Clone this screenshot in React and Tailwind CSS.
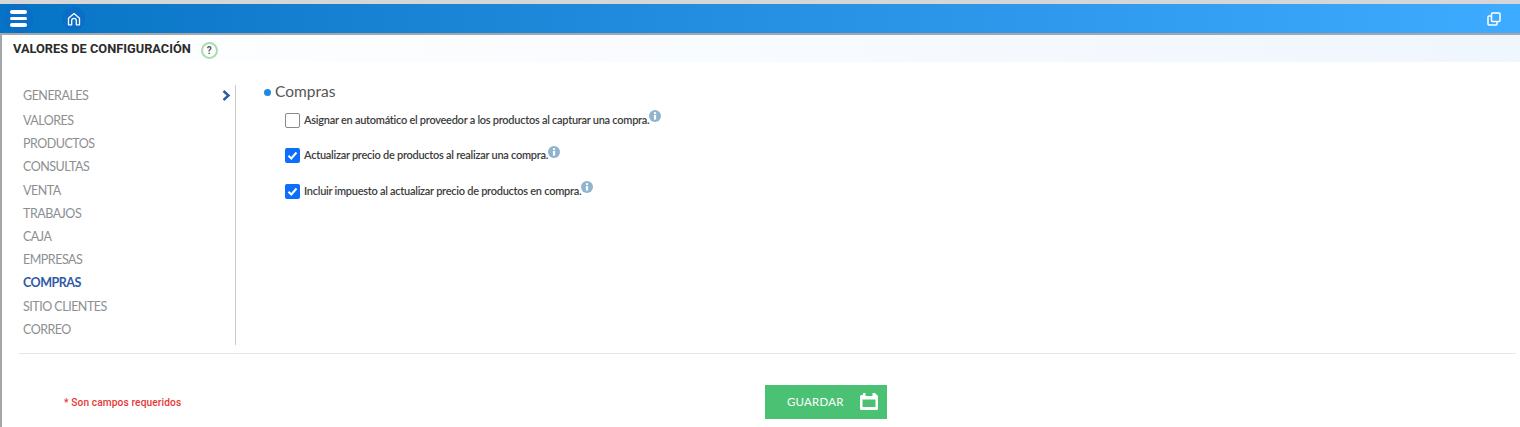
const items = ["VALORES","PRODUCTOS","CONSULTAS","VENTA","TRABAJOS","CAJA","EMPRESAS","COMPRAS","SITIO CLIENTES","CORREO"];
const opts = [
  { t: "Asignar en automático el proveedor a los productos al capturar una compra.", c: false },
  { t: "Actualizar precio de productos al realizar una compra.", c: true },
  { t: "Incluir impuesto al actualizar precio de productos en compra.", c: true },
];
function Info() {
  return (
    <svg width="12" height="12" viewBox="0 0 12 12" className="shrink-0 mt-[-8px] ml-0">
      <circle cx="6" cy="6" r="6" fill="#8fb4d0" />
      <rect x="4.9" y="5" width="2.2" height="4.6" fill="#fff" />
      <rect x="4.9" y="2.2" width="2.2" height="1.9" fill="#fff" />
    </svg>
  );
}
export default function App() {
  return (
    <div className="w-[1520px] h-[427px] overflow-hidden bg-white font-['Lato',sans-serif] flex flex-col">
      <div className="h-[4px] bg-[#d6d6d6] shrink-0" />
      <header className="h-[31px] shrink-0 flex items-center bg-gradient-to-r from-[#0574c4] to-[#3dabff] border-b-2 border-[#a3a7ab] pl-[4px] pr-[19px]">
        <div className="w-[29px] h-[29px] rounded-full bg-[#0a6dc6] flex flex-col items-center justify-center gap-[3px] shrink-0">
          <span className="w-[17px] h-[3.5px] bg-white rounded-full" />
          <span className="w-[17px] h-[3.5px] bg-white rounded-full" />
          <span className="w-[17px] h-[3.5px] bg-white rounded-full" />
        </div>
        <div className="ml-[29px] w-[23px] h-[23px] rounded-full bg-[#0a6dc6] flex items-center justify-center shrink-0">
          <svg width="14" height="14" viewBox="0 0 14 14" fill="none" stroke="#fff" strokeWidth="1.3">
            <path d="M1.5 6.2 7 1.6l5.5 4.6v6.6H9.3V8.6a2.3 2.3 0 0 0-4.6 0v4.2H1.5z" strokeLinejoin="round" />
          </svg>
        </div>
        <svg width="14" height="14" viewBox="0 0 14 14" fill="none" stroke="#fff" strokeWidth="1.5" className="ml-auto">
          <rect x="4.5" y="1" width="8.5" height="8.5" rx="1" />
          <path d="M4 4H2a1 1 0 0 0-1 1v7a1 1 0 0 0 1 1h7a1 1 0 0 0 1-1v-2" />
        </svg>
      </header>
      <div className="flex-1 flex flex-col border-l-2 border-[#a3a7ab] relative">
        <div className="h-[27px] shrink-0 flex items-center bg-gradient-to-r from-white to-[#f0f6fe] pl-[11px]">
          <h1 className="font-['Roboto',sans-serif] font-bold text-[12.8px] leading-none text-[#2b2b2b] mt-[2px]">VALORES DE CONFIGURACIÓN</h1>
          <span className="ml-[10px] mt-[4px] w-[17px] h-[17px] rounded-full border-2 border-[#a9dcae] flex items-center justify-center font-['Roboto',sans-serif] font-bold text-[10px] text-[#555]">?</span>
        </div>
        <div className="flex pt-[23px] h-[291px] shrink-0">
          <nav className="w-[214px] ml-[20px] h-[260px] border-r border-[#c9c9c9] text-[12.5px] tracking-[-0.5px] leading-[23.2px] text-[#8d8f91] shrink-0">
            <div className="flex items-center justify-between h-[22px] mb-[2px]">
              <span className="ml-[1px]">GENERALES</span>
              <svg width="9" height="11" viewBox="0 0 9 11" fill="none" stroke="#2b5ca8" strokeWidth="2.4" className="mr-[4px] mt-[-2px]"><path d="M1.5 1 6.5 5.5 1.5 10" /></svg>
            </div>
            {items.map(i => (
              <div key={i} className={i === "COMPRAS" ? "ml-[1px] font-bold text-[#2f5aa5]" : "ml-[1px]"}>{i}</div>
            ))}
          </nav>
          <section className="ml-[28px] flex-1">
            <div className="flex items-center h-[14px] text-[#555] text-[15.5px]">
              <span className="w-[7px] h-[7px] rounded-full bg-[#1e88e5] mr-[4px]" />
              Compras
            </div>
            <div className="ml-[21px] mt-[11px] flex flex-col gap-[15.5px]">
              {opts.map(o => (
                <div key={o.t} className="flex items-center h-[20px] text-[11px] tracking-[-0.27px] font-semibold text-[#3c3c3c]">
                  {o.c ? (
                    <span className="w-[15px] h-[15px] rounded-[2px] bg-[#0d6efd] flex items-center justify-center mr-[4px] shrink-0">
                      <svg width="11" height="11" viewBox="0 0 11 11" fill="none" stroke="#fff" strokeWidth="2"><path d="M1.5 5.8 4.3 8.5 9.5 2.5" /></svg>
                    </span>
                  ) : (
                    <span className="w-[15px] h-[15px] rounded-[2px] bg-white border border-[#8a8a8a] mr-[4px] shrink-0" />
                  )}
                  <span>{o.t}</span>
                  <Info />
                </div>
              ))}
            </div>
          </section>
        </div>
        <div className="ml-[17px] mr-[4px] h-px bg-[#e3e8ee] shrink-0" />
        <div className="flex items-center h-[73px] relative">
          <span className="absolute left-[62px] top-[44px] font-['Roboto',sans-serif] font-medium text-[10.2px] text-[#e53935] leading-none tracking-[0.1px]">* Son campos requeridos</span>
          <button className="absolute left-[763px] top-[31px] w-[122px] h-[34px] bg-[#4bc273] flex items-center pl-[22px] text-white text-[11.5px] tracking-[0.2px]">
            GUARDAR
            <svg width="18" height="17" viewBox="0 0 18 17" fill="#fff" fillRule="evenodd" className="ml-[16px] mt-[-2px]">
              <path d="M3 0h2.5v3h7V0H15l3 3v12.5a1.5 1.5 0 0 1-1.5 1.5h-15A1.5 1.5 0 0 1 0 15.5v-12A1.5 1.5 0 0 1 1.5 2H3zM2.5 6.5V14h13V6.5z" />
            </svg>
          </button>
        </div>
      </div>
    </div>
  );
}
